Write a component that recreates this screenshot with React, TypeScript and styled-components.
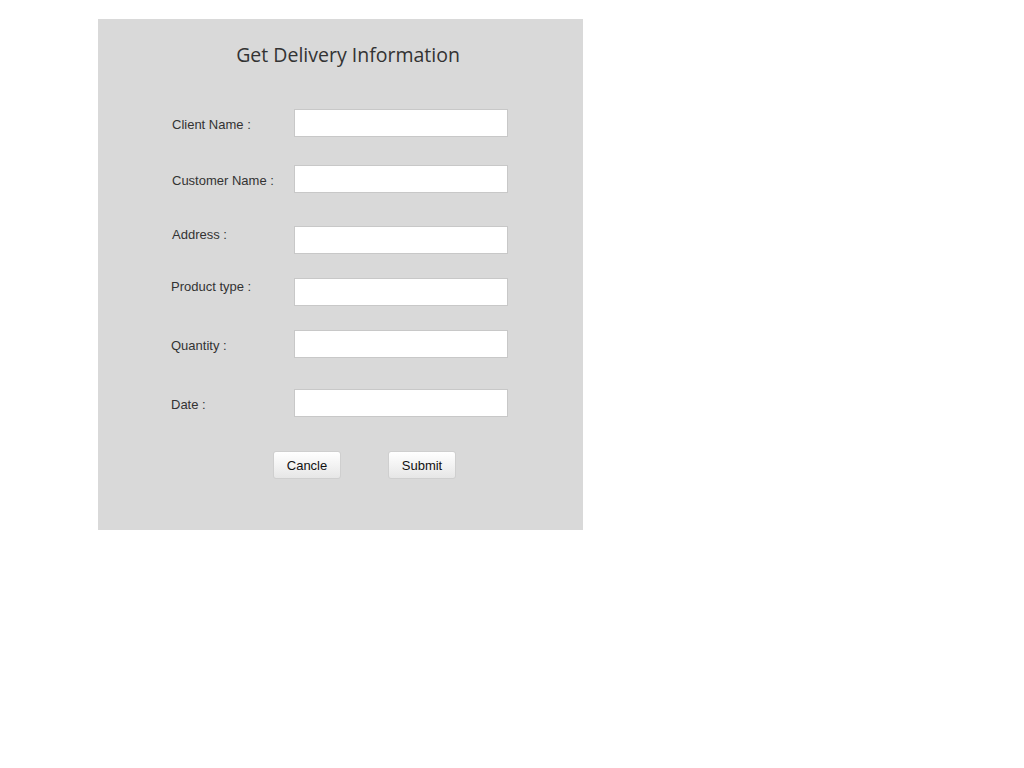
import React from "react";
import styled, { createGlobalStyle } from "styled-components";

const Global = createGlobalStyle`
  html, body { margin: 0; padding: 0; background: #fff; }
  body { font-family: "Liberation Sans", Arial, sans-serif; }
`;

const Panel = styled.div`
  box-sizing: border-box;
  margin: 19px 0 0 98px;
  width: 485px;
  height: 511px;
  background: #d9d9d9;
  padding-top: 22px;
  display: flex;
  flex-direction: column;
`;

const Title = styled.h2`
  margin: 0;
  padding-left: 15px;
  text-align: center;
  font-family: "Open Sans", sans-serif;
  font-weight: 400;
  font-size: 19.5px;
  line-height: 27px;
  color: #333;
`;

const Form = styled.form`
  display: flex;
  flex-direction: column;
  padding-top: 41px;
`;

const Row = styled.div<{ $top: number }>`
  display: flex;
  align-items: center;
  margin-top: ${(p) => p.$top}px;
`;

const Label = styled.label<{ $indent: number; $raise?: boolean }>`
  box-sizing: border-box;
  width: 196px;
  padding-left: ${(p) => p.$indent}px;
  margin-bottom: ${(p) => (p.$raise ? 12 : 0)}px;
  margin-top: ${(p) => (p.$raise ? 0 : 2)}px;
  font-size: 13px;
  line-height: 15px;
  color: #333;
`;

const Input = styled.input`
  box-sizing: border-box;
  width: 214px;
  height: 28px;
  margin: 0;
  border: 1px solid #c8c8c8;
  background: #fff;
  padding: 0 6px;
  font-family: "Liberation Sans", Arial, sans-serif;
  font-size: 13px;
  outline: none;
`;

const Actions = styled.div`
  display: flex;
  gap: 47px;
  padding-left: 175px;
  margin-top: 34px;
`;

const Button = styled.button`
  box-sizing: border-box;
  width: 68px;
  height: 28px;
  margin: 0;
  padding: 0;
  border: 1px solid #cfcfcf;
  border-radius: 3px;
  background: linear-gradient(to bottom, #ffffff 0%, #f3f3f3 50%, #e6e6e6 100%);
  font-family: "Liberation Sans", Arial, sans-serif;
  font-size: 13px;
  color: #111;
  cursor: pointer;
`;

const fields = [
  { label: "Client Name :", top: 0, indent: 74 },
  { label: "Customer Name :", top: 28, indent: 74 },
  { label: "Address :", top: 33, indent: 74, raise: true },
  { label: "Product type :", top: 24, indent: 73, raise: true },
  { label: "Quantity :", top: 24, indent: 73 },
  { label: "Date :", top: 31, indent: 73 },
];

export default function App() {
  return (
    <>
      <Global />
      <Panel>
        <Title>Get Delivery Information</Title>
        <Form onSubmit={(e) => e.preventDefault()}>
          {fields.map((f) => (
            <Row key={f.label} $top={f.top}>
              <Label $indent={f.indent} $raise={f.raise}>
                {f.label}
              </Label>
              <Input type="text" />
            </Row>
          ))}
          <Actions>
            <Button type="button">Cancle</Button>
            <Button type="submit">Submit</Button>
          </Actions>
        </Form>
      </Panel>
    </>
  );
}
